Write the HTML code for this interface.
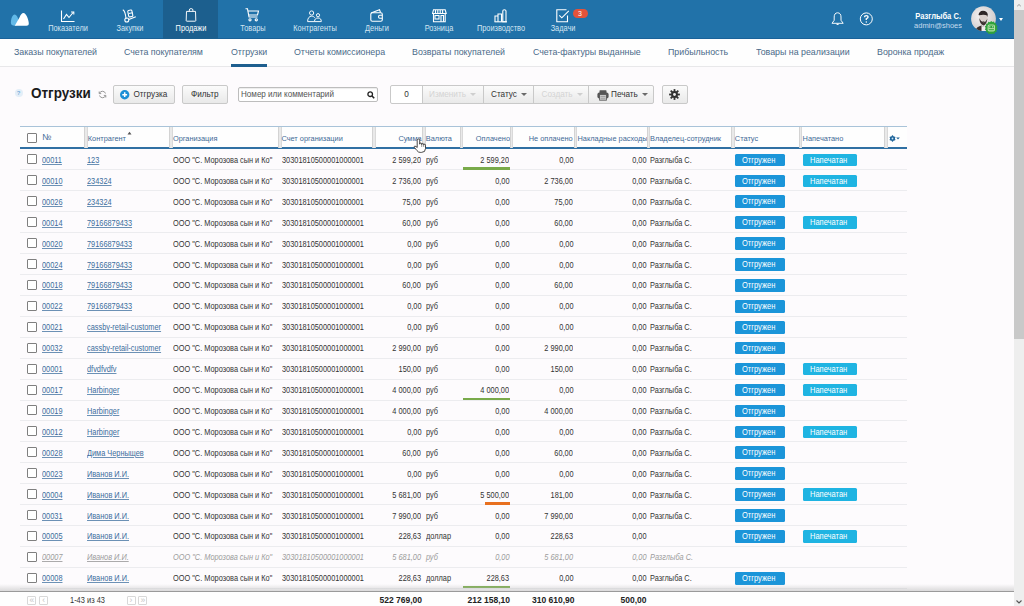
<!DOCTYPE html>
<html><head><meta charset="utf-8"><title>Отгрузки</title>
<style>
*{margin:0;padding:0;box-sizing:border-box}
html,body{width:1024px;height:606px;overflow:hidden;background:#fdfbfd;font-family:"Liberation Sans",sans-serif;position:relative}
.abs{position:absolute}
#hdr{position:absolute;left:0;top:0;width:1014px;height:39px;background:#2172a9;border-bottom:1.5px solid #1a6299}
#hdr .act{position:absolute;left:163px;top:0;width:55px;height:39px;background:#1c5f8e}
.nl{position:absolute;top:23.9px;font-size:8.2px;line-height:10px;color:#d3e5f2;white-space:nowrap;transform:translateX(-50%) scaleX(.9)}
.nl.w{color:#fff}
.ni{position:absolute}
#scroll{position:absolute;left:1014px;top:0;width:10px;height:606px;background:#eeeeee}
#thumb{position:absolute;left:1014px;top:10px;width:10px;height:329px;background:#c9c9c9}
#sub{position:absolute;left:0;top:39px;width:1014px;height:28px;background:#fefefe;border-bottom:1px solid #e8e8ea}
.st{position:absolute;top:46.2px;font-size:9.6px;line-height:12px;color:#4a6a89;white-space:nowrap;transform:scaleX(.92);transform-origin:0 0}
#uline{position:absolute;left:231px;top:64px;width:36px;height:2.5px;background:#1e5f8f}
.title{position:absolute;left:31.4px;top:85.4px;font-size:14.5px;font-weight:bold;color:#1a1a1a;line-height:17px;transform:scaleX(.93);transform-origin:0 0}
.btn{position:absolute;top:85px;height:19px;border:1px solid #c9c9c9;border-radius:2px;background:linear-gradient(#fbfbfb,#e9e9e9);font-size:8.2px;color:#333;line-height:17px;white-space:nowrap}
.btn.dis{color:#d4d4d4}
.grp{border-radius:0}
.caret{display:inline-block;width:0;height:0;border-left:3.2px solid transparent;border-right:3.2px solid transparent;border-top:3px solid #6a6a6a;vertical-align:middle;margin-left:4px;position:relative;top:0}
.dis .caret{border-top-color:#cfcfcf}
#search{position:absolute;left:238px;top:87px;width:140px;height:14.5px;border:1px solid #bdbdbd;border-radius:2px;background:#fff;font-size:8.6px;color:#555;line-height:10px;white-space:nowrap;box-shadow:inset 0 1px 1px rgba(0,0,0,.08)}
/* table */
#thead{position:absolute;left:20px;top:126px;width:887px;height:23px;border-top:1px solid #a9c3d9;border-bottom:2px solid #3070a3;background:#fefefe}
.sep{position:absolute;top:0;width:3.5px;height:20.5px;background:#e9e9e9;border-left:1px solid #d3d3d3;border-right:1px solid #d9d9d9}
.th{position:absolute;top:7px;font-size:7.4px;line-height:9px;color:#3e6a96;white-space:nowrap}
.row{position:absolute;left:20px;width:887px;height:21px;border-bottom:1px solid #ececef;font-size:9.5px;color:#333;white-space:nowrap}
.c{position:absolute;top:5.5px;line-height:10px;transform:scaleX(.775);transform-origin:0 0}
a.c{color:#3b6d9c;text-decoration:underline;text-decoration-color:rgba(59,109,156,.75)}
.r{text-align:right;transform-origin:100% 0}
.cb{position:absolute;left:7px;top:5px;width:10px;height:10px;border:1px solid #7f7f7f;border-radius:1px;background:#fff}
.num{left:22px}
.agent{left:67px}
.org{left:153px}
.acc{left:262px}
.sum{right:486px}
.cur{left:406px}
.paid{right:398px}
.unpaid{right:334px}
.over{right:261px}
.owner{left:630px}
.bar{position:absolute;left:443px;top:18px;width:47px;height:2.5px}
.bar.green{background:#79aa4a}
.bar.orange{background:#e8701f;left:465px;width:25px}
.badge{position:absolute;top:4.2px;height:12.6px;font-size:9px;line-height:12.6px;color:#fff;border-radius:1.5px}
.badge span{position:absolute;left:6.5px;top:0;transform:scaleX(.835);transform-origin:0 0}
.b1{left:715px;width:50px;background:#1b95d9}
.b2{left:783px;width:54px;background:#1fb4e2}
.del{color:#9c9c9c;font-style:italic}
.del a.c{color:#9c9c9c;text-decoration-color:rgba(150,150,150,.8)}
#fshadow{position:absolute;left:0;top:584px;width:1014px;height:7px;background:linear-gradient(rgba(200,200,200,0),rgba(190,190,190,.55))}
#foot{position:absolute;left:0;top:590.5px;width:1014px;height:15.5px;background:#fefefe;border-top:1.6px solid #9a9a9a}
.pg{position:absolute;top:595.5px;width:9px;height:9px;border:1px solid #d8d8d8;border-radius:1px;background:#fff;color:#c4c4c4;font-size:8.5px;line-height:7px;text-align:center}
.tot{position:absolute;top:596px;font-size:8.5px;font-weight:bold;line-height:9px;color:#222;white-space:nowrap}

</style></head>
<body>
<div id="hdr">
 <div class="act"></div>
 <!-- logo -->
 <svg class="ni" style="left:0;top:0" width="40" height="39" viewBox="0 0 40 39">
  <path d="M10.9 22.8 C10.9 18.5, 12.6 14.4, 14.6 14.4 C16.8 14.4, 18.6 18.5, 18.6 22.3 C18.6 25, 17 25.8, 14.8 25.8 C12.4 25.8, 10.9 25, 10.9 22.8 Z" fill="#62b9e8"/>
  <path d="M14.8 25.8 L19.6 17.2 C20.6 14.8, 21.9 12.9, 23.4 12.9 C26.3 12.9, 28.8 20, 28.8 23.3 C28.8 25.1, 28 25.8, 26.5 25.8 Z" fill="#fff"/>
 </svg>
 <!-- Показатели -->
 <svg class="ni" style="left:60px;top:10px" width="16" height="13" viewBox="0 0 16 13" fill="none" stroke="#fff" stroke-width="1.1">
  <path d="M1.5 0.5 V11.5 H14.5"/><path d="M3.5 9 L6.5 4.5 L9 7.5 L13.5 2"/><path d="M11 2 H13.8 V4.6"/>
 </svg>
 <div class="nl" style="left:68px">Показатели</div>
 <!-- Закупки -->
 <svg class="ni" style="left:122px;top:9px" width="15" height="14" viewBox="0 0 15 14" fill="none" stroke="#fff" stroke-width="1.1">
  <path d="M0.8 0.8 C2.5 1.5, 3.5 4, 4 10"/><circle cx="4.8" cy="11" r="2"/><path d="M6.8 10.5 L13.8 7.8"/><rect x="6.2" y="1.3" width="4.2" height="6.5" rx="1" transform="rotate(-12 8 4.5)"/><path d="M6.8 4.5 L10.6 3.8"/>
 </svg>
 <div class="nl" style="left:129.5px">Закупки</div>
 <!-- Продажи -->
 <svg class="ni" style="left:185px;top:7.8px" width="12" height="14" viewBox="0 0 12 14" fill="none" stroke="#fff" stroke-width="0.95">
  <path d="M1.5 3.4 H10.5 L10.8 12.6 Q10.8 13.2 10.2 13.2 H1.8 Q1.2 13.2 1.2 12.6 Z" stroke-linejoin="round"/><path d="M4.3 3.4 V2 Q4.3 0.6 6.1 0.6 Q7.9 0.6 7.9 2 V3.4"/>
 </svg>
 <div class="nl w" style="left:190.6px">Продажи</div>
 <!-- Товары -->
 <svg class="ni" style="left:245px;top:8px" width="15" height="14" viewBox="0 0 15 14" fill="none" stroke="#fff" stroke-width="1.1">
  <path d="M0.5 0.8 H2.5 L4 9 H12.5"/><path d="M2.9 3 H13.5 L12.5 7 H3.6"/><circle cx="5" cy="11.8" r="1.1"/><circle cx="11.3" cy="11.8" r="1.1"/>
 </svg>
 <div class="nl" style="left:252.7px">Товары</div>
 <!-- Контрагенты -->
 <svg class="ni" style="left:306px;top:10px" width="16" height="13" viewBox="0 0 16 13" fill="none" stroke="#fff" stroke-width="0.95">
  <circle cx="5.6" cy="3" r="2.1"/><path d="M1.6 11.6 C1.6 8, 3.3 6.2, 5.6 6.2 C7.2 6.2, 8.2 6.8, 8.8 7.8"/><path d="M1.6 11.6 H8.5"/><circle cx="12" cy="5.2" r="1.6"/><path d="M8.5 11.6 C8.5 9.2, 9.8 8, 12 8 C14.2 8, 15.3 9.2, 15.3 11.6 Z"/>
 </svg>
 <div class="nl" style="left:314.9px">Контрагенты</div>
 <!-- Деньги -->
 <svg class="ni" style="left:370px;top:9px" width="14" height="13" viewBox="0 0 14 13" fill="none" stroke="#fff" stroke-width="1.1">
  <path d="M1 4 L9.5 0.8 L10.5 3.5"/><rect x="0.8" y="3.8" width="11.5" height="8.5" rx="1.5"/><path d="M12.3 6.3 H9.8 Q8.5 6.3 8.5 7.7 Q8.5 9.2 9.8 9.2 H12.3"/>
 </svg>
 <div class="nl" style="left:376.6px">Деньги</div>
 <!-- Розница -->
 <svg class="ni" style="left:432px;top:8.5px" width="15" height="14" viewBox="0 0 15 14" fill="none" stroke="#fff" stroke-width="1.1">
  <path d="M1.5 0.8 H13.2 L14.2 4.5 H0.5 Z"/><path d="M3.5 1 V4.3 M5.8 1 V4.3 M8.2 1 V4.3 M10.6 1 V4.3"/><path d="M1.5 4.5 V12.8 H13.2 V4.5"/><rect x="3" y="6.5" width="4" height="3.5"/><path d="M9 12.8 V6.5 H11.5 V12.8"/>
 </svg>
 <div class="nl" style="left:438.7px">Розница</div>
 <!-- Производство -->
 <svg class="ni" style="left:494px;top:8.5px" width="14" height="14" viewBox="0 0 14 14" fill="none" stroke="#fff" stroke-width="1.1">
  <path d="M1 12.8 V7 H4 V12.8 M4 12.8 V5 H7.5 V12.8 M8.8 12.8 V2 Q8.8 0.7 10.3 0.7 Q12 0.7 12 2 V12.8 Z"/><path d="M0.5 12.8 H13"/>
 </svg>
 <div class="nl" style="left:501px">Производство</div>
 <!-- Задачи -->
 <svg class="ni" style="left:556px;top:8.5px" width="14" height="14" viewBox="0 0 14 14" fill="none" stroke="#fff" stroke-width="1.1">
  <path d="M11.5 6.5 V12.8 H0.8 V0.8 H10.5"/><path d="M3.3 6.3 L5.8 8.8 L12.8 1.8"/>
 </svg>
 <div class="nl" style="left:562.9px">Задачи</div>
 <div class="abs" style="left:572.5px;top:8.8px;width:15px;height:9px;border-radius:4.5px;background:#e4533a;color:#fff;font-size:7px;line-height:9px;text-align:center">3</div>
 <!-- bell -->
 <svg class="ni" style="left:830px;top:12px" width="15" height="14" viewBox="0 0 15 14" fill="none" stroke="#fff" stroke-width="0.95">
  <path d="M7.6 0.8 C5.2 0.8, 4.2 2.6, 4.2 5 V8.3 L2 11.3 H13.2 L11 8.3 V5 C11 2.6, 10 0.8, 7.6 0.8 Z" stroke-linejoin="round"/><path d="M6.6 11.8 Q7.6 12.8 8.6 11.8" stroke-width="1.1"/>
 </svg>
 <!-- help -->
 <svg class="ni" style="left:859px;top:12px" width="15" height="15" viewBox="0 0 15 15" fill="none" stroke="#fff" stroke-width="1">
  <circle cx="7.3" cy="6.9" r="6"/><path d="M5.5 5.3 Q5.5 3.6 7.3 3.6 Q9.1 3.6 9.1 5.1 Q9.1 6.1 7.3 6.8 V8" stroke-width="1.4"/><circle cx="7.3" cy="9.9" r="0.75" fill="#fff" stroke="none"/>
 </svg>
 <div class="abs" style="left:861px;width:100px;top:10.5px;text-align:right;font-size:8.6px;line-height:10px;font-weight:bold;color:#fff;white-space:nowrap;transform:scaleX(.88);transform-origin:100% 0">Разглыба С.</div>
 <div class="abs" style="left:862px;width:100px;top:20.5px;text-align:right;font-size:8px;line-height:10px;color:#c6dcee;white-space:nowrap;transform:scaleX(.935);transform-origin:100% 0">admin@shoes</div>
 <!-- avatar -->
 <svg class="ni" style="left:971px;top:5.5px" width="28" height="28" viewBox="0 0 28 28">
  <defs><radialGradient id="av" cx="0.4" cy="0.4" r="0.65"><stop offset="0" stop-color="#f6f4f4"/><stop offset="1" stop-color="#cfc9c9"/></radialGradient><clipPath id="avc"><circle cx="12.5" cy="12.7" r="12.4"/></clipPath></defs>
  <circle cx="12.5" cy="12.7" r="12.4" fill="url(#av)"/>
  <g clip-path="url(#avc)">
  <path d="M7.5 9 Q8 5 12 4.8 Q16 4.8 16.8 8.5 L16.5 11 Q14 8 9 9.5 Z" fill="#2e2626"/>
  <path d="M8.5 9.5 Q12.5 7.8 16.5 9.8 L16.3 14 Q13 16 9 14Z" fill="#d9cfcb"/>
  <path d="M8.3 12 Q8.5 18 12.5 19.5 Q15.8 18.5 16.4 12.5 Q15 16 12.6 16.2 Q10 16 8.3 12Z" fill="#3d3330"/>
  <path d="M11 15.5 Q12.5 14.8 14 15.5 Q12.5 16.5 11 15.5Z" fill="#5a4a46"/>
  <path d="M3 27 Q5 20.5 10.5 19.5 L12.5 21 L11 28Z" fill="#3a302c"/>
  <path d="M10.5 19.5 L12.5 21 L14.5 19.8 L15 28 H10.5Z" fill="#eeeaea"/>
  </g>
  <g transform="translate(20.3 21.8) scale(1.22) translate(-20.1 -20.8)">
  <path d="M20 15.2 L21 16 L22.3 15.6 L22.8 16.9 L24.2 17.2 L24.1 18.6 L25.3 19.5 L24.6 20.7 L25.4 21.9 L24.3 22.8 L24.5 24.2 L23.1 24.5 L22.6 25.8 L21.3 25.5 L20.2 26.4 L19.2 25.5 L17.9 26 L17.3 24.7 L15.9 24.5 L15.9 23.1 L14.8 22.2 L15.5 21 L14.8 19.8 L15.9 18.9 L15.8 17.5 L17.2 17.2 L17.6 15.9 L19 16.2 Z" fill="#2fa23a"/>
  <rect x="17.5" y="18.5" width="5.2" height="4.8" rx="1" fill="none" stroke="#b5dfa6" stroke-width="0.9"/>
  <path d="M17.8 21.5 H22.4" stroke="#b5dfa6" stroke-width="0.9"/>
  <circle cx="18.9" cy="20" r="0.5" fill="#fff"/><circle cx="21.3" cy="20" r="0.5" fill="#fff"/>
  </g>
 </svg>
 <div class="abs" style="left:998.5px;top:17.5px;width:0;height:0;border-left:2.7px solid transparent;border-right:2.7px solid transparent;border-top:3px solid #fff"></div>
</div>
<div id="scroll"></div>
<div id="thumb"></div>
<svg class="abs" style="left:1015px;top:2px" width="8" height="6" viewBox="0 0 8 6"><path d="M2.2 4.2 L4 2.5 L5.8 4.2" stroke="#9a9a9a" stroke-width="1" fill="none"/></svg>
<svg class="abs" style="left:1015px;top:599px" width="8" height="6" viewBox="0 0 8 6"><path d="M1.5 1.5 L4 4 L6.5 1.5" stroke="#555" stroke-width="1.1" fill="none"/></svg>

<div id="sub"></div>
<div class="st" style="left:14px">Заказы покупателей</div>
<div class="st" style="left:124px">Счета покупателям</div>
<div class="st" style="left:230.7px">Отгрузки</div>
<div class="st" style="left:294px">Отчеты комиссионера</div>
<div class="st" style="left:412px">Возвраты покупателей</div>
<div class="st" style="left:533px">Счета-фактуры выданные</div>
<div class="st" style="left:668px">Прибыльность</div>
<div class="st" style="left:756px">Товары на реализации</div>
<div class="st" style="left:877px">Воронка продаж</div>
<div id="uline"></div>

<!-- toolbar -->
<div class="abs" style="left:14.5px;top:89px;width:8px;height:8px;border-radius:50%;background:#e3eef8;color:#7aaed8;font-size:6px;line-height:8px;text-align:center;font-weight:bold">?</div>
<div class="title">Отгрузки</div>
<svg class="abs" style="left:97.5px;top:90px" width="9" height="9" viewBox="0 0 9 9" fill="none" stroke="#8c8c8c" stroke-width="0.9"><path d="M7.5 3.5 A3.2 3.2 0 0 0 1.5 3.2"/><path d="M1.5 5.5 A3.2 3.2 0 0 0 7.5 5.8"/><path d="M1.2 1.5 V3.6 H3.2" /><path d="M7.8 7.5 V5.4 H5.8"/></svg>
<div class="btn" style="left:112.5px;width:62px"><svg class="abs" style="left:6.6px;top:3.6px" width="10" height="10" viewBox="0 0 10 10"><circle cx="4.7" cy="4.7" r="4.7" fill="#1c8fd6"/><path d="M4.7 2.3 V7.1 M2.3 4.7 H7.1" stroke="#fff" stroke-width="1.5"/></svg><span class="abs" style="left:20px">Отгрузка</span></div>
<div class="btn" style="left:181.5px;width:46.5px;text-align:center">Фильтр</div>
<div id="search"><span class="abs" style="left:2.3px;top:1.2px;transform:scaleX(.94);transform-origin:0 0">Номер или комментарий</span><svg class="abs" style="left:128px;top:3px" width="8" height="8" viewBox="0 0 8 8"><circle cx="3.2" cy="3.2" r="2.3" fill="none" stroke="#222" stroke-width="1.3"/><path d="M4.8 4.8 L7.2 7.2" stroke="#222" stroke-width="1.6"/></svg></div>
<div class="btn" style="left:390px;width:33px;text-align:center;background:#fff;border-radius:2px 0 0 2px">0</div>
<div class="btn dis" style="left:422px;width:61.5px;border-radius:0;padding-left:6px">Изменить<span class="caret"></span></div>
<div class="btn" style="left:483px;width:50.5px;border-radius:0;padding-left:7px">Статус<span class="caret"></span></div>
<div class="btn dis" style="left:533px;width:55.5px;border-radius:0;padding-left:7.5px">Создать<span class="caret"></span></div>
<div class="btn" style="left:588px;width:66px;border-radius:0 2px 2px 0;padding-left:22px"><svg class="abs" style="left:7.5px;top:3.5px" width="12" height="11" viewBox="0 0 12 11"><rect x="2.5" y="0.3" width="7" height="3" rx="0.6" fill="#555"/><rect x="0.4" y="2.6" width="11.2" height="5.8" rx="2" fill="#555"/><rect x="2.6" y="4.6" width="6.8" height="5.6" fill="#c9c9c9" stroke="#555" stroke-width="0.8"/><path d="M3.5 6.5 H8.5 M3.5 8.3 H8.5" stroke="#888" stroke-width="0.6"/></svg>Печать<span class="caret"></span></div>
<div class="btn" style="left:661.5px;width:26px"><svg class="abs" style="left:6.5px;top:3px" width="11" height="11" viewBox="0 0 11 11"><g fill="#333" transform="translate(5.5 5.5)"><circle r="3.4"/><rect x="-0.9" y="-5.4" width="1.8" height="10.8"/><rect x="-0.9" y="-5.4" width="1.8" height="10.8" transform="rotate(45)"/><rect x="-0.9" y="-5.4" width="1.8" height="10.8" transform="rotate(90)"/><rect x="-0.9" y="-5.4" width="1.8" height="10.8" transform="rotate(135)"/></g><circle cx="5.5" cy="5.5" r="1.4" fill="#eee"/></svg></div>

<!-- table header -->
<div id="thead">
 <i class="cb" style="top:6px"></i>
 <span class="th" style="left:22px;font-size:8.6px;top:6.4px">№</span>
 <span class="sep" style="left:64px"></span>
 <span class="th" style="left:67.8px">Контрагент</span>
 <svg class="abs" style="left:107px;top:3.5px" width="5" height="4" viewBox="0 0 5 4"><path d="M0.5 3.5 L2.5 0.8 L4.5 3.5Z" fill="#555"/></svg>
 <span class="sep" style="left:149px"></span>
 <span class="th" style="left:152.9px">Организация</span>
 <span class="sep" style="left:258px"></span>
 <span class="th" style="left:261.4px">Счет организации</span>
 <span class="sep" style="left:352px"></span>
 <span class="th" style="right:485.4px">Сумма</span>
 <span class="sep" style="left:402px"></span>
 <span class="th" style="left:405.8px">Валюта</span>
 <span class="sep" style="left:439.5px"></span>
 <span class="th" style="right:397px">Оплачено</span>
 <span class="sep" style="left:489.5px"></span>
 <span class="th" style="right:334.3px">Не оплачено</span>
 <span class="sep" style="left:553.7px"></span>
 <span class="th" style="left:557.5px">Накладные расходы</span>
 <span class="sep" style="left:626.5px"></span>
 <span class="th" style="left:630px">Владелец-сотрудник</span>
 <span class="sep" style="left:711.4px"></span>
 <span class="th" style="left:714.8px">Статус</span>
 <span class="sep" style="left:778.5px"></span>
 <span class="th" style="left:782.6px">Напечатано</span>
 <span class="sep" style="left:864px"></span>
 <svg class="abs" style="left:869px;top:8.3px" width="13" height="8" viewBox="0 0 13 8"><g fill="#1f6499" transform="translate(3.5 3.5)"><circle r="2.5"/><rect x="-0.6" y="-3.2" width="1.2" height="6.4"/><rect x="-0.6" y="-3.2" width="1.2" height="6.4" transform="rotate(60)"/><rect x="-0.6" y="-3.2" width="1.2" height="6.4" transform="rotate(120)"/></g><circle cx="3.5" cy="3.5" r="0.9" fill="#cfe6f5"/><path d="M7.2 2.4 H10.8 L9 4.4Z" fill="#1f6499"/></svg>
</div>
<div class="row" style="top:149.40px"><i class="cb"></i><a class="c num">00011</a><a class="c agent">123</a><span class="c org">ООО "С. Морозова сын и Ко"</span><span class="c acc">30301810500001000001</span><span class="c r sum">2 599,20</span><span class="c cur">руб</span><span class="c r paid">2 599,20</span><i class="bar green"></i><span class="c r unpaid">0,00</span><span class="c r over">0,00</span><span class="c owner">Разглыба С.</span><span class="badge b1"><span>Отгружен</span></span><span class="badge b2"><span>Напечатан</span></span></div>
<div class="row" style="top:170.32px"><i class="cb"></i><a class="c num">00010</a><a class="c agent">234324</a><span class="c org">ООО "С. Морозова сын и Ко"</span><span class="c acc">30301810500001000001</span><span class="c r sum">2 736,00</span><span class="c cur">руб</span><span class="c r paid">0,00</span><span class="c r unpaid">2 736,00</span><span class="c r over">0,00</span><span class="c owner">Разглыба С.</span><span class="badge b1"><span>Отгружен</span></span><span class="badge b2"><span>Напечатан</span></span></div>
<div class="row" style="top:191.24px"><i class="cb"></i><a class="c num">00026</a><a class="c agent">234324</a><span class="c org">ООО "С. Морозова сын и Ко"</span><span class="c acc">30301810500001000001</span><span class="c r sum">75,00</span><span class="c cur">руб</span><span class="c r paid">0,00</span><span class="c r unpaid">75,00</span><span class="c r over">0,00</span><span class="c owner">Разглыба С.</span><span class="badge b1"><span>Отгружен</span></span></div>
<div class="row" style="top:212.16px"><i class="cb"></i><a class="c num">00014</a><a class="c agent">79166879433</a><span class="c org">ООО "С. Морозова сын и Ко"</span><span class="c acc">30301810500001000001</span><span class="c r sum">60,00</span><span class="c cur">руб</span><span class="c r paid">0,00</span><span class="c r unpaid">60,00</span><span class="c r over">0,00</span><span class="c owner">Разглыба С.</span><span class="badge b1"><span>Отгружен</span></span><span class="badge b2"><span>Напечатан</span></span></div>
<div class="row" style="top:233.08px"><i class="cb"></i><a class="c num">00020</a><a class="c agent">79166879433</a><span class="c org">ООО "С. Морозова сын и Ко"</span><span class="c acc">30301810500001000001</span><span class="c r sum">0,00</span><span class="c cur">руб</span><span class="c r paid">0,00</span><span class="c r unpaid">0,00</span><span class="c r over">0,00</span><span class="c owner">Разглыба С.</span><span class="badge b1"><span>Отгружен</span></span></div>
<div class="row" style="top:254.00px"><i class="cb"></i><a class="c num">00024</a><a class="c agent">79166879433</a><span class="c org">ООО "С. Морозова сын и Ко"</span><span class="c acc">30301810500001000001</span><span class="c r sum">0,00</span><span class="c cur">руб</span><span class="c r paid">0,00</span><span class="c r unpaid">0,00</span><span class="c r over">0,00</span><span class="c owner">Разглыба С.</span><span class="badge b1"><span>Отгружен</span></span></div>
<div class="row" style="top:274.92px"><i class="cb"></i><a class="c num">00018</a><a class="c agent">79166879433</a><span class="c org">ООО "С. Морозова сын и Ко"</span><span class="c acc">30301810500001000001</span><span class="c r sum">60,00</span><span class="c cur">руб</span><span class="c r paid">0,00</span><span class="c r unpaid">60,00</span><span class="c r over">0,00</span><span class="c owner">Разглыба С.</span><span class="badge b1"><span>Отгружен</span></span></div>
<div class="row" style="top:295.84px"><i class="cb"></i><a class="c num">00022</a><a class="c agent">79166879433</a><span class="c org">ООО "С. Морозова сын и Ко"</span><span class="c acc">30301810500001000001</span><span class="c r sum">0,00</span><span class="c cur">руб</span><span class="c r paid">0,00</span><span class="c r unpaid">0,00</span><span class="c r over">0,00</span><span class="c owner">Разглыба С.</span><span class="badge b1"><span>Отгружен</span></span></div>
<div class="row" style="top:316.76px"><i class="cb"></i><a class="c num">00021</a><a class="c agent">cassby-retail-customer</a><span class="c org">ООО "С. Морозова сын и Ко"</span><span class="c acc">30301810500001000001</span><span class="c r sum">0,00</span><span class="c cur">руб</span><span class="c r paid">0,00</span><span class="c r unpaid">0,00</span><span class="c r over">0,00</span><span class="c owner">Разглыба С.</span><span class="badge b1"><span>Отгружен</span></span></div>
<div class="row" style="top:337.68px"><i class="cb"></i><a class="c num">00032</a><a class="c agent">cassby-retail-customer</a><span class="c org">ООО "С. Морозова сын и Ко"</span><span class="c acc">30301810500001000001</span><span class="c r sum">2 990,00</span><span class="c cur">руб</span><span class="c r paid">0,00</span><span class="c r unpaid">2 990,00</span><span class="c r over">0,00</span><span class="c owner">Разглыба С.</span><span class="badge b1"><span>Отгружен</span></span></div>
<div class="row" style="top:358.60px"><i class="cb"></i><a class="c num">00001</a><a class="c agent">dfvdfvdfv</a><span class="c org">ООО "С. Морозова сын и Ко"</span><span class="c acc">30301810500001000001</span><span class="c r sum">150,00</span><span class="c cur">руб</span><span class="c r paid">0,00</span><span class="c r unpaid">150,00</span><span class="c r over">0,00</span><span class="c owner">Разглыба С.</span><span class="badge b1"><span>Отгружен</span></span><span class="badge b2"><span>Напечатан</span></span></div>
<div class="row" style="top:379.52px"><i class="cb"></i><a class="c num">00017</a><a class="c agent">Harbinger</a><span class="c org">ООО "С. Морозова сын и Ко"</span><span class="c acc">30301810500001000001</span><span class="c r sum">4 000,00</span><span class="c cur">руб</span><span class="c r paid">4 000,00</span><i class="bar green"></i><span class="c r unpaid">0,00</span><span class="c r over">0,00</span><span class="c owner">Разглыба С.</span><span class="badge b1"><span>Отгружен</span></span><span class="badge b2"><span>Напечатан</span></span></div>
<div class="row" style="top:400.44px"><i class="cb"></i><a class="c num">00019</a><a class="c agent">Harbinger</a><span class="c org">ООО "С. Морозова сын и Ко"</span><span class="c acc">30301810500001000001</span><span class="c r sum">4 000,00</span><span class="c cur">руб</span><span class="c r paid">0,00</span><span class="c r unpaid">4 000,00</span><span class="c r over">0,00</span><span class="c owner">Разглыба С.</span><span class="badge b1"><span>Отгружен</span></span></div>
<div class="row" style="top:421.36px"><i class="cb"></i><a class="c num">00012</a><a class="c agent">Harbinger</a><span class="c org">ООО "С. Морозова сын и Ко"</span><span class="c acc">30301810500001000001</span><span class="c r sum">0,00</span><span class="c cur">руб</span><span class="c r paid">0,00</span><span class="c r unpaid">0,00</span><span class="c r over">0,00</span><span class="c owner">Разглыба С.</span><span class="badge b1"><span>Отгружен</span></span><span class="badge b2"><span>Напечатан</span></span></div>
<div class="row" style="top:442.28px"><i class="cb"></i><a class="c num">00028</a><a class="c agent">Дима Черныщев</a><span class="c org">ООО "С. Морозова сын и Ко"</span><span class="c acc">30301810500001000001</span><span class="c r sum">60,00</span><span class="c cur">руб</span><span class="c r paid">0,00</span><span class="c r unpaid">60,00</span><span class="c r over">0,00</span><span class="c owner">Разглыба С.</span><span class="badge b1"><span>Отгружен</span></span></div>
<div class="row" style="top:463.20px"><i class="cb"></i><a class="c num">00023</a><a class="c agent">Иванов И.И.</a><span class="c org">ООО "С. Морозова сын и Ко"</span><span class="c acc">30301810500001000001</span><span class="c r sum">0,00</span><span class="c cur">руб</span><span class="c r paid">0,00</span><span class="c r unpaid">0,00</span><span class="c r over">0,00</span><span class="c owner">Разглыба С.</span><span class="badge b1"><span>Отгружен</span></span></div>
<div class="row" style="top:484.12px"><i class="cb"></i><a class="c num">00004</a><a class="c agent">Иванов И.И.</a><span class="c org">ООО "С. Морозова сын и Ко"</span><span class="c acc">30301810500001000001</span><span class="c r sum">5 681,00</span><span class="c cur">руб</span><span class="c r paid">5 500,00</span><i class="bar orange"></i><span class="c r unpaid">181,00</span><span class="c r over">0,00</span><span class="c owner">Разглыба С.</span><span class="badge b1"><span>Отгружен</span></span><span class="badge b2"><span>Напечатан</span></span></div>
<div class="row" style="top:505.04px"><i class="cb"></i><a class="c num">00031</a><a class="c agent">Иванов И.И.</a><span class="c org">ООО "С. Морозова сын и Ко"</span><span class="c acc">30301810500001000001</span><span class="c r sum">7 990,00</span><span class="c cur">руб</span><span class="c r paid">0,00</span><span class="c r unpaid">7 990,00</span><span class="c r over">0,00</span><span class="c owner">Разглыба С.</span><span class="badge b1"><span>Отгружен</span></span></div>
<div class="row" style="top:525.96px"><i class="cb"></i><a class="c num">00005</a><a class="c agent">Иванов И.И.</a><span class="c org">ООО "С. Морозова сын и Ко"</span><span class="c acc">30301810500001000001</span><span class="c r sum">228,63</span><span class="c cur">доллар</span><span class="c r paid">0,00</span><span class="c r unpaid">228,63</span><span class="c r over">0,00</span><span class="badge b1"><span>Отгружен</span></span><span class="badge b2"><span>Напечатан</span></span></div>
<div class="row del" style="top:546.88px"><i class="cb"></i><a class="c num">00007</a><a class="c agent">Иванов И.И.</a><span class="c org">ООО "С. Морозова сын и Ко"</span><span class="c acc">30301810500001000001</span><span class="c r sum">5 681,00</span><span class="c cur">руб</span><span class="c r paid">0,00</span><span class="c r unpaid">5 681,00</span><span class="c r over">0,00</span><span class="c owner">Разглыба С.</span></div>
<div class="row" style="top:567.80px"><i class="cb"></i><a class="c num">00008</a><a class="c agent">Иванов И.И.</a><span class="c org">ООО "С. Морозова сын и Ко"</span><span class="c acc">30301810500001000001</span><span class="c r sum">228,63</span><span class="c cur">доллар</span><span class="c r paid">228,63</span><i class="bar green"></i><span class="c r unpaid">0,00</span><span class="c r over">0,00</span><span class="c owner">Разглыба С.</span><span class="badge b1"><span>Отгружен</span></span></div>
<div id="fshadow"></div><div id="foot"></div>
<div class="pg" style="left:27.3px">«</div>
<div class="pg" style="left:39.2px">‹</div>
<div class="abs" style="left:70.2px;top:596px;font-size:8.2px;line-height:10px;color:#333;white-space:nowrap;transform:scaleX(.91);transform-origin:0 0">1-43 из 43</div>
<div class="pg" style="left:126.5px">›</div>
<div class="pg" style="left:138.3px">»</div>
<div class="tot" style="right:602px">522 769,00</div>
<div class="tot" style="right:514px">212 158,10</div>
<div class="tot" style="right:449.5px">310 610,90</div>
<div class="tot" style="right:377.5px">500,00</div>
<!-- cursor -->
<svg class="abs" style="left:413px;top:138px" width="14" height="16" viewBox="0 0 14 16"><path d="M4.2 9 V2.2 Q4.2 1 5.45 1 Q6.7 1 6.7 2.2 V6.2 Q6.7 5 7.7 5 Q8.7 5 8.7 6.2 V6.7 Q8.7 5.5 9.7 5.5 Q10.7 5.5 10.7 6.7 V7.2 Q10.7 6.2 11.6 6.2 Q12.5 6.2 12.5 7.2 V10.5 Q12.5 14.4 8.5 14.4 H7.2 Q5.2 14.4 4 12.6 L1.3 9.4 Q0.8 8.4 1.8 8.2 Q3 8 4.2 9.5 Z" fill="#fff" stroke="#333" stroke-width="0.9" stroke-linejoin="round"/><path d="M8.7 6.7 V9 M10.7 7.2 V9" stroke="#555" stroke-width="0.6"/></svg>

</body></html>
